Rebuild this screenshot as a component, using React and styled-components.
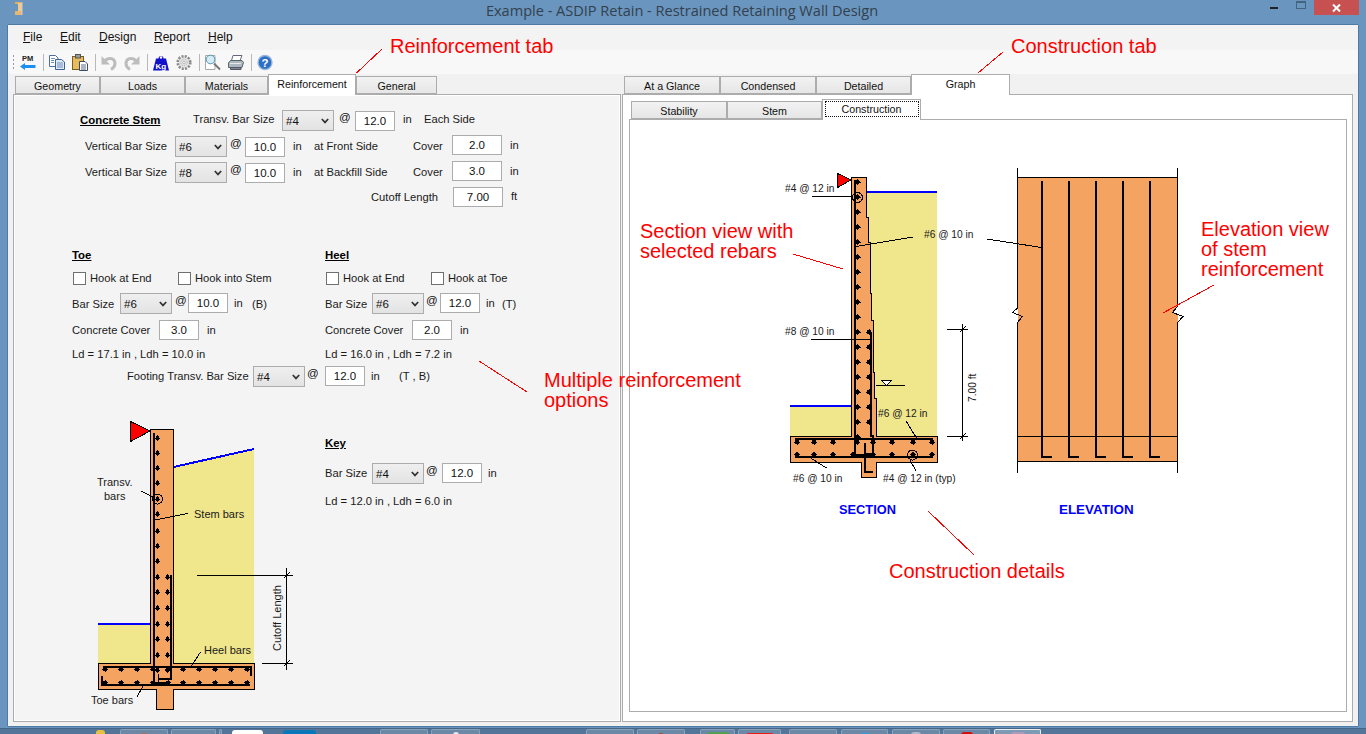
import React from "react";
import styled, { createGlobalStyle } from "styled-components";

const Global = createGlobalStyle`
  html, body { margin: 0; padding: 0; width: 100%; height: 100%; overflow: hidden; background: #6a95be; }
  * { box-sizing: border-box; }
  #root { width: 1366px; height: 734px; }
`;

const SANS = `"Liberation Sans", Arial, sans-serif`;

const Screen = styled.div`
  position: relative; width: 1366px; height: 734px; overflow: hidden; background: #6a95be;
  display: flex; flex-direction: column; font-family: ${SANS}; color: #111;
`;
const TitleBar = styled.div`
  height: 25px; flex: none; display: flex; align-items: flex-start; padding-left: 14px;
`;
const AppIcon = styled.svg`width: 10px; height: 15px; margin-top: 1px; flex: none;`;
const TitleText = styled.div`
  width: 1236px; flex: none; text-align: center; padding-left: 80px; font: 14.6px/20px "Open Sans", sans-serif; color: #33414e; letter-spacing: -0.03px;
`;
const Controls = styled.div`display: flex; align-items: flex-start; margin-left: 10px; flex: none;`;
const MinBtn = styled.div`width: 8px; height: 2px; background: #222; margin: 7px 0 0 0;`;
const MaxBtn = styled.div`width: 10px; height: 8px; border: 1px solid #44637f; border-top-width: 2px; margin: 1px 0 0 18px;`;
const CloseBtn = styled.div`
  width: 45px; height: 15px; background: #c75050; margin-left: 8px; display: flex; align-items: center; justify-content: center;
`;

const AppWindow = styled.div`
  flex: none; height: 701px; margin: 0 8px; background: #f1f1f1; display: flex; flex-direction: column;
  box-shadow: 0 -1px 0 #4d7ba5, -1px 0 0 #4d7ba5, 1px 0 0 #4d7ba5, 0 1px 0 #4d7ba5;
`;
const MenuBar = styled.div`
  height: 25px; flex: none; display: flex; align-items: center; padding: 0 0 1px 15px; background: #f3f3f3; font-size: 12px;
`;
const MenuItem = styled.span`
  width: ${p => p.$w}px; flex: none; color: #111;
  &::first-letter { text-decoration: underline; }
`;
const ToolBar = styled.div`
  height: 24px; flex: none; display: flex; align-items: center; gap: 7px; padding-left: 4px;
  background: #f8f8f8; border-bottom-left-radius: 4px;
`;
const Grip = styled.div`
  width: 3px; height: 17px; margin-right: -2px;
  background-image: radial-gradient(#9a9a9a 0.8px, transparent 1px); background-size: 3px 4px;
`;
const ToolSep = styled.div`width: 1px; height: 17px; background: #b9b9b9; margin-right: -2px;`;
const ToolIcon = styled.svg`width: 16px; height: 17px; flex: none; overflow: visible;`;

const Panes = styled.div`
  flex: 1; min-height: 0; display: flex; gap: 1px; padding: 0 5px 4px;
`;
const Pane = styled.div`
  width: ${p => p.$w}px; flex: none; display: flex; flex-direction: column;
`;
const TabStrip = styled.div`
  height: ${p => p.$h || 20}px; flex: none; display: flex; align-items: flex-end; padding-left: 2px; position: relative; z-index: 1;
  margin-top: ${p => p.$mt || 0}px; margin-left: ${p => p.$ml || 0}px;
`;
const Tab = styled.div`
  width: ${p => p.$w}px; flex: none; border: 1px solid #acacac; display: flex; justify-content: center; color: #111;
  font-size: 10.7px;
  ${p => p.$active ? `
    height: 21px; margin-bottom: -1px; background: #fff; border-bottom: 0; padding-top: 2px; line-height: 15px;
  ` : `
    height: 18px; background: linear-gradient(#f2f2f2, #e6e6e6); line-height: 19px;
  `}
`;
const FocusBox = styled.span`
  border: 1px dotted #111; width: 94px; height: 16px; text-align: center; line-height: 14px; margin-top: -1px; background: #fff;
`;
const Panel = styled.div`
  flex: 1; min-height: 0; border: 1px solid #acacac; padding: 1px; background: ${p => p.$bg};
  box-shadow: inset 0 0 0 1px #fff; display: flex; flex-direction: column;
`;
const Form = styled.div`
  padding-top: 14px; display: flex; flex-direction: column; background: #f4f4f4; flex: 1; font-size: 11.2px;
`;
const Row = styled.div`
  display: flex; align-items: flex-start; height: ${p => p.$h || 21}px; margin-top: ${p => p.$mt || 0}px; padding-left: ${p => p.$pl || 0}px; flex: none;
`;
const Label = styled.span`
  display: block; flex: none; white-space: nowrap; line-height: 21px;
  ${p => p.$w ? `width: ${p.$w}px;` : ""}
  margin-left: ${p => p.$l || 0}px; margin-top: ${p => p.$t || 0}px; color: #1a1a1a;
`;
const Heading = styled.span`
  display: block; flex: none; white-space: nowrap; font-weight: bold; text-decoration: underline; font-size: 11.4px; line-height: 20px; color: #000;
  ${p => p.$w ? `width: ${p.$w}px;` : ""}
`;
const At = styled.span`
  display: block; flex: none; width: ${p => p.$w}px; padding-left: ${p => p.$pad}px; line-height: 21px; margin-top: -3px; font-size: 11.5px;
`;
const SelectBox = styled.div`
  width: 52px; height: 21px; flex: none; border: 1px solid #acacac; background: linear-gradient(#efefef, #e3e3e3);
  display: flex; align-items: center; justify-content: space-between; padding: 1px 4px 0 3px; font-size: 11.5px; color: #111;
`;
const Chevron = styled.svg`width: 8px; height: 6px; flex: none;`;
const NumInput = styled.input`
  width: ${p => p.$w}px; height: 20px; flex: none; border: 1px solid #acacac; background: #fff; text-align: center; padding: 0 0 1px;
  margin-top: ${p => p.$t || 0}px; font: 11.5px ${SANS}; color: #111; outline: none; border-radius: 0;
`;
const Check = styled.input.attrs({ type: "checkbox" })`
  appearance: none; width: 13px; height: 13px; flex: none; margin: 4px 0 0 1px; background: #fff; border: 1px solid #707070; border-radius: 0;
`;
const Columns = styled.div`display: flex; margin-top: 37px; flex: none;`;
const Column = styled.div`
  width: ${p => p.$w}px; flex: none; padding-left: ${p => p.$pl || 0}px; display: flex; flex-direction: column;
`;
const BottomArea = styled.div`display: flex; margin-top: 33px; padding-left: 75px; flex: none;`;
const KeyColumn = styled.div`margin-left: 25px; padding-top: 13px; display: flex; flex-direction: column;`;

const Diagram = styled.svg`
  display: block; flex: none; width: ${p => p.$w}px; height: ${p => p.$h}px;
  text { font-family: ${SANS}; fill: #1a1a1a; }
`;
const GraphArea = styled.div`
  margin-left: 5px; width: 718px; height: 593px; border: 1px solid #acacac; background: #fff; flex: none;
`;
const Overlay = styled.div`position: absolute; inset: 0; pointer-events: none; z-index: 5;`;
const OverlayLines = styled.svg`display: block; width: 1366px; height: 734px;`;
const Note = styled.div`
  position: absolute; left: ${p => p.$x}px; top: ${p => p.$y}px; color: #ff0000; font-size: 20px; line-height: 20px; white-space: nowrap;
`;
const TaskBar = styled.div`
  flex: none; margin-top: 2px; height: 6px; background: #527599; display: flex; align-items: flex-start; border-top: 1px solid #466685;
`;
const TaskItem = styled.div`
  flex: none; width: ${p => p.$w}px; margin-left: ${p => p.$l}px; height: 6px; display: flex; justify-content: center; border-radius: 2px 2px 0 0;
  ${p => p.$plain ? "" : `border: 1px solid ${p.$active ? "#e8eef4" : "#8aa3bb"}; border-bottom: 0; background: ${p.$active ? "#7f9ab5" : "#6b89a7"};`}
`;
const TaskGlimpse = styled.div`
  width: ${p => p.$w}px; height: 4px; background: ${p => p.$c}; margin-top: ${p => p.$t || 1}px; border-radius: 3px 3px 0 0;
`;

const Sel = ({ v }) => (
  <SelectBox>
    <span>{v}</span>
    <Chevron viewBox="0 0 8 6"><path d="M0.8 1 L4 4.4 L7.2 1" fill="none" stroke="#333" strokeWidth="1.7" /></Chevron>
  </SelectBox>
);
const Num = ({ v, w = 40, t }) => <NumInput readOnly value={v} $w={w} $t={t} />;

const STEEL = "#000";
const Dot = ({ x, y, s = 1 }) => (
  <g>
    <circle cx={x} cy={y} r={2.2 * s} fill={STEEL} />
    <path d={`M${x - 3 * s} ${y}H${x + 3 * s}M${x} ${y - 3 * s}V${y + 3 * s}`} stroke={STEEL} strokeWidth="1" />
  </g>
);
const Seg = ({ d, w = 1, c = "#000" }) => <path d={d} fill="none" stroke={c} strokeWidth={w} />;

const LEFT_STEM_Y = [438, 453, 468, 483, 499, 514, 531, 546, 561, 577, 592, 608, 624, 639, 655, 670];
const LEFT_BACK_Y = [577, 592, 608, 624, 639, 655, 670];
const LEFT_FOOT_X = [105, 121, 137, 153, 168, 183, 199, 215, 231, 247];

const RetainingMini = () => (
  <Diagram viewBox="90 420 210 292" $w={210} $h={292}>
    <g shapeRendering="crispEdges">
      <polygon points="173,467 254,449 254,663 173,663" fill="#f0e68c" />
      <rect x="98" y="624" width="52" height="39" fill="#f0e68c" />
      <Seg d="M173.5 467 L254 449" w={2} c="#0000ff" />
      <Seg d="M98 624 H150" w={2} c="#0000ff" />
      <path d="M150.5 429.5 H173.5 V663.5 H254.5 V689.5 H173.5 V709.5 H156.5 V689.5 H98.5 V663.5 H150.5 Z" fill="#f4a460" stroke="#000" />
      <polygon points="130.5,421.5 130.5,441.5 150,431" fill="#ff0000" stroke="#000" />
      <Seg d="M154 433 V683" w={2} />
      <Seg d="M170.5 575 V679 H158" w={2} />
      <Seg d="M103 666.5 H251 V676" w={2} />
      <Seg d="M102 676 V684.5 H250" w={2} />
      <Seg d="M152 683 H167" w={2} />
      <Seg d="M158 674 V683" w={1} />
      <Seg d="M141 491 L155 498" />
      <Seg d="M155 520 L188 513.5" />
      <Seg d="M197 575.5 H293" />
      <Seg d="M262 663.5 H293" />
      <Seg d="M286.5 568 V669.5" />
      <Seg d="M283.5 578.5 L289.5 572.5 M283.5 666.5 L289.5 660.5" />
      <Seg d="M191.5 666 L200.5 652" />
      <Seg d="M137 697 L143 686" />
      {LEFT_STEM_Y.map(y => <Dot key={y} x={157.5} y={y} s={0.85} />)}
      {LEFT_BACK_Y.map(y => <Dot key={y} x={167.5} y={y} s={0.85} />)}
      {LEFT_FOOT_X.map(x => <Dot key={x} x={x} y={669.5} s={0.85} />)}
      {LEFT_FOOT_X.map(x => <Dot key={x} x={x} y={682.5} s={0.85} />)}
      <circle cx="157.5" cy="499" r="5" fill="none" stroke="#000" />
    </g>
    <g fontSize="11">
      <text x="97" y="486">Transv.</text>
      <text x="104" y="500">bars</text>
      <text x="194" y="518">Stem bars</text>
      <text x="204" y="654">Heel bars</text>
      <text x="91" y="704">Toe bars</text>
      <text transform="translate(281 651) rotate(-90)">Cutoff Length</text>
    </g>
  </Diagram>
);

const SEC_STEM_Y = [182, 197, 212, 227, 242, 257, 272, 287, 302, 317, 332, 347, 362, 377, 392, 407, 422, 437];
const SEC_BACK_Y = [332, 347, 362, 377, 392, 407, 422];
const SEC_TOP_X = [797, 814, 833, 857, 873, 892, 913, 932];
const SEC_BOT_X = [797, 814, 833, 853, 873, 892, 913, 932];
const ELEV_X = [1041.5, 1069, 1096, 1123, 1150];

const GraphDrawing = () => (
  <Diagram viewBox="630 120 716 591" $w={716} $h={591}>
    <g shapeRendering="crispEdges">
      <rect x="866" y="192" width="71" height="245" fill="#f0e68c" />
      <rect x="790" y="406" width="62" height="31" fill="#f0e68c" />
      <Seg d="M867 192 H937" w={2} c="#0000ff" />
      <Seg d="M790 406 H852" w={2} c="#0000ff" />
      <path d="M851.5 177.5 H866.5 V217 H868 V242 H870 V293 H871.5 V320 H873 V372 H874.5 V398 H876 V436.5 H937.5 V462.5 H876.5 V477.5 H861.5 V462.5 H790.5 V436.5 H851.5 Z" fill="#f4a460" stroke="#000" />
      <polygon points="837.5,173.5 837.5,187.5 851,180" fill="#ff0000" stroke="#000" />
      <Seg d="M855 180 V455" w={2} />
      <Seg d="M871 332 V436 H872.5 V455 H855" w={2} />
      <Seg d="M795 439 H933" w={2} />
      <Seg d="M795 456.5 H933" w={2} />
      <Seg d="M865 443 V471.5 H873" w={2} />
      <Seg d="M866 453 H873 V458" w={1} />
      {SEC_STEM_Y.map(y => <Dot key={y} x={857.5} y={y} />)}
      {SEC_BACK_Y.map(y => <Dot key={y} x={869} y={y} />)}
      {SEC_TOP_X.map(x => <Dot key={x} x={x} y={442} />)}
      {SEC_BOT_X.map(x => <Dot key={x} x={x} y={454.5} />)}
      <circle cx="857.5" cy="197.5" r="5" fill="none" stroke="#000" />
      <circle cx="912.5" cy="455" r="5" fill="none" stroke="#000" />
      <Seg d="M812 196.5 H853" />
      <Seg d="M913 237 L856 246.5" />
      <Seg d="M811 339.5 H870" />
      <Seg d="M876 385.5 H905" />
      <path d="M881.5 380.5 H891.5 L886.5 385.5 Z" fill="#fff" stroke="#000" />
      <Seg d="M906 421 L916.5 438" />
      <Seg d="M810 457.5 L826.5 468" />
      <Seg d="M910 460.5 L916.5 471.5" />
      <Seg d="M947 329.5 H968" />
      <Seg d="M947 436.5 H968" />
      <Seg d="M962.5 324 V441" />
      <Seg d="M959.5 332.5 L965.5 326.5 M959.5 439.5 L965.5 433.5" />

      <polygon points="1017.5,177.5 1177.5,177.5 1177.5,461.5 1017.5,461.5" fill="#f4a460" />
      <polygon points="1177.5,306.5 1172.5,312.5 1183,316.5 1177.5,322.5 1190,322 1190,306" fill="#fff" />
      <Seg d="M1017.5 167.5 V308 L1012.5 312.5 L1022.5 316.5 L1017.5 322.5 V472.5" />
      <Seg d="M1177.5 167.5 V306.5 L1172.5 312.5 L1183 316.5 L1177.5 322.5 V472.5" />
      <Seg d="M1017.5 177.5 H1177.5" />
      <Seg d="M1017.5 461.5 H1177.5" />
      <Seg d="M1017.5 436.5 H1177.5" />
      {ELEV_X.map(x => <Seg key={x} d={`M${x} 181 V456.5 H${x + 10}`} w={2} />)}
      <Seg d="M987 239 L1041.5 247.5" />
    </g>
    <g fontSize="10.2">
      <text x="785" y="192">#4 @ 12 in</text>
      <text x="924" y="238">#6 @ 10 in</text>
      <text x="785" y="335">#8 @ 10 in</text>
      <text x="878" y="417">#6 @ 12 in</text>
      <text x="793" y="482">#6 @ 10 in</text>
      <text x="883" y="482">#4 @ 12 in (typ)</text>
      <text transform="translate(975.5 402) rotate(-90)">7.00 ft</text>
    </g>
    <g fontWeight="bold">
      <text x="839" y="514" fontSize="12.8" style={{ fill: "#0000ff" }}>SECTION</text>
      <text x="1059" y="514" fontSize="13.4" style={{ fill: "#0000ff" }}>ELEVATION</text>
    </g>
  </Diagram>
);

const PmIcon = () => (
  <ToolIcon viewBox="0 0 16 17">
    <text x="2" y="7" fontSize="7.5" fontWeight="bold" fontFamily={SANS} fill="#222">PM</text>
    <path d="M0 12.5 L5 9 V11 H15.5 V14 H5 V16 Z" fill="#1c8ff0" />
  </ToolIcon>
);
const CopyIcon = () => (
  <ToolIcon viewBox="0 0 16 17">
    <path d="M0.5 1.5 H6.5 L9 4 V12.5 H0.5 Z" fill="#fff" stroke="#4f6f9e" />
    <path d="M6.5 5.5 H12.5 L15.5 8 V15.5 H6.5 Z" fill="#dfe8f5" stroke="#3e6296" />
    <path d="M8 9 H14 M8 11 H14 M8 13 H14 M2 4.5 H6 M2 6.5 H5 M2 8.5 H5" stroke="#6f8fbf" />
  </ToolIcon>
);
const PasteIcon = () => (
  <ToolIcon viewBox="0 0 16 17">
    <rect x="0.5" y="2.5" width="11" height="13" fill="#e6bc5c" stroke="#7d5c20" />
    <rect x="3.5" y="0.5" width="5" height="3.5" fill="#9a9a9a" stroke="#555" />
    <path d="M7.5 7.5 H13 L15.5 10 V16.5 H7.5 Z" fill="#fff" stroke="#3c4a63" />
    <path d="M9 11 H14 M9 13 H14 M9 15 H14" stroke="#566a8a" />
  </ToolIcon>
);
const UndoIcon = ({ flip }) => (
  <ToolIcon viewBox="0 0 16 17">
    <g transform={flip ? "translate(16 0) scale(-1 1)" : undefined}>
      <path d="M4 6.5 C8 3 14 4 14 9.5 C14 12 12.5 14 10 15.5" fill="none" stroke="#bdbdbd" strokeWidth="3" />
      <path d="M0.5 2 V10.5 H9 Z" fill="#bdbdbd" />
    </g>
  </ToolIcon>
);
const KgIcon = () => (
  <ToolIcon viewBox="0 0 16 17">
    <path d="M5.5 4.5 A2.5 2.5 0 1 1 10.5 4.5 H13 L16 16.5 H0 L3 4.5 Z" fill="#1111cc" />
    <circle cx="8" cy="3.5" r="1.2" fill="#f8f8f8" />
    <text x="2.6" y="14.5" fontSize="8" fontWeight="bold" fontFamily={SANS} fill="#fff">Kg</text>
  </ToolIcon>
);
const GearIcon = () => (
  <ToolIcon viewBox="0 0 16 17">
    <circle cx="8" cy="8.5" r="6.3" fill="#e6e6e6" stroke="#8a8a8a" strokeWidth="2.6" strokeDasharray="2 1.3" />
    <circle cx="8" cy="8.5" r="3.2" fill="none" stroke="#a8a8a8" strokeDasharray="1 1" />
    <circle cx="8" cy="8.5" r="1.3" fill="#f8f8f8" stroke="#999" strokeWidth="0.6" />
  </ToolIcon>
);
const SearchIcon = () => (
  <ToolIcon viewBox="0 0 16 17">
    <path d="M0.5 1.5 H10 V15.5 H0.5 Z" fill="#fff" stroke="#a8a8a8" />
    <circle cx="5.5" cy="5.5" r="4.3" fill="#d4eef8" stroke="#5a94ac" />
    <path d="M9 9.5 L15 15.5" stroke="#777" strokeWidth="2" />
  </ToolIcon>
);
const PrintIcon = () => (
  <ToolIcon viewBox="0 0 16 17">
    <path d="M5 1.5 H14 L12 6.5 H3.5 Z" fill="#fff" stroke="#667" />
    <path d="M2.5 6.5 H14 L15.5 8.5 L14 13.5 H0.5 V9 Z" fill="#aeb6c2" stroke="#566" />
    <path d="M2.5 13.5 H13 V15.5 H2.5 Z" fill="#7c8796" stroke="#556" />
    <path d="M2 9.5 H13" stroke="#e8e8e8" />
  </ToolIcon>
);
const HelpIcon = () => (
  <ToolIcon viewBox="0 0 16 17">
    <circle cx="8" cy="8.5" r="7" fill="#2d6fc4" stroke="#9ab8da" strokeWidth="1.4" />
    <text x="8" y="12.6" textAnchor="middle" fontSize="11.5" fontWeight="bold" fontFamily={SANS} fill="#fff">?</text>
  </ToolIcon>
);

const TASK_ITEMS = [
  { l: 96, w: 9, plain: true, c: "#e8c040", g: 9 },
  { l: 15, w: 48, c: "#b56a5a", g: 8, t: 3 },
  { l: 3, w: 45 },
  { l: 3, w: 3 },
  { l: 10, w: 31, plain: true, c: "#ffffff", g: 31 },
  { l: 20, w: 33, plain: true, c: "#0a78b8", g: 33 },
  { l: 64, w: 48 },
  { l: 3, w: 49, c: "#e8e8e8", g: 6, t: 2 },
  { l: 106, w: 48 },
  { l: 3, w: 48, c: "#b8422e", g: 6, t: 3 },
  { l: 15, w: 35, c: "#50a050", g: 22, t: 2 },
  { l: 3, w: 43, c: "#e81c10", g: 28, t: 3 },
  { l: 8, w: 48 },
  { l: 4, w: 47, c: "#22a0e0", g: 10, t: 3 },
  { l: 4, w: 48, c: "#b0b8c8", g: 10, t: 2 },
  { l: 3, w: 47, c: "#d01010", g: 12, t: 2 },
  { l: 4, w: 47, active: true, c: "#b09ab8", g: 14, t: 2 },
];

export default function App() {
  return (
    <Screen>
      <Global />
      <TitleBar>
        <AppIcon viewBox="0 0 10 15">
          <path d="M1 1 H7 V3 H1 Z" fill="#e0b060" />
          <path d="M4 2 H8 V12 H4 Z" fill="#f4c888" />
          <path d="M1 10 H8 V14 H1 Z" fill="#e8b670" />
          <path d="M8 1 V14" stroke="#c8d0d8" strokeWidth="1" />
        </AppIcon>
        <TitleText>Example - ASDIP Retain - Restrained Retaining Wall Design</TitleText>
        <Controls>
          <MinBtn />
          <MaxBtn />
          <CloseBtn>
            <svg width="9" height="8" viewBox="0 0 9 8"><path d="M1 0.5 L8 7.5 M8 0.5 L1 7.5" stroke="#fff" strokeWidth="2" /></svg>
          </CloseBtn>
        </Controls>
      </TitleBar>

      <AppWindow>
        <MenuBar>
          <MenuItem $w={37}>File</MenuItem>
          <MenuItem $w={39}>Edit</MenuItem>
          <MenuItem $w={55}>Design</MenuItem>
          <MenuItem $w={54}>Report</MenuItem>
          <MenuItem $w={30}>Help</MenuItem>
        </MenuBar>
        <ToolBar>
          <Grip />
          <PmIcon />
          <ToolSep />
          <CopyIcon />
          <PasteIcon />
          <ToolSep />
          <UndoIcon />
          <UndoIcon flip />
          <ToolSep />
          <KgIcon />
          <GearIcon />
          <ToolSep />
          <SearchIcon />
          <PrintIcon />
          <ToolSep />
          <HelpIcon />
        </ToolBar>

        <Panes>
          <Pane $w={608}>
            <TabStrip>
              <Tab $w={85}>Geometry</Tab>
              <Tab $w={85}>Loads</Tab>
              <Tab $w={83}>Materials</Tab>
              <Tab $w={88} $active>Reinforcement</Tab>
              <Tab $w={81}>General</Tab>
            </TabStrip>
            <Panel $bg="#f4f4f4">
              <Form>
                <Row $pl={65}>
                  <Heading $w={113}>Concrete Stem</Heading>
                  <Label $w={89} $t={-1}>Transv. Bar Size</Label>
                  <Sel v="#4" />
                  <At $w={21} $pad={5}>@</At>
                  <Num v="12.0" t={1} />
                  <Label $l={8} $w={21} $t={-1}>in</Label>
                  <Label $t={-1}>Each Side</Label>
                </Row>
                <Row $mt={5} $pl={70}>
                  <Label $w={90}>Vertical Bar Size</Label>
                  <Sel v="#6" />
                  <At $w={18} $pad={3}>@</At>
                  <Num v="10.0" t={1} />
                  <Label $l={8} $w={21}>in</Label>
                  <Label $w={99}>at Front Side</Label>
                  <Label $w={39}>Cover</Label>
                  <Num v="2.0" w={50} t={-1} />
                  <Label $l={8} $t={-1}>in</Label>
                </Row>
                <Row $mt={5} $pl={70}>
                  <Label $w={90}>Vertical Bar Size</Label>
                  <Sel v="#8" />
                  <At $w={18} $pad={3}>@</At>
                  <Num v="10.0" t={1} />
                  <Label $l={8} $w={21}>in</Label>
                  <Label $w={99}>at Backfill Side</Label>
                  <Label $w={39}>Cover</Label>
                  <Num v="3.0" w={50} t={-1} />
                  <Label $l={8} $t={-1}>in</Label>
                </Row>
                <Row $mt={4} $pl={356}>
                  <Label $w={82}>Cutoff Length</Label>
                  <Num v="7.00" w={50} />
                  <Label $l={8} $t={-1}>ft</Label>
                </Row>

                <Columns>
                  <Column $w={310} $pl={57}>
                    <Row $h={20}><Heading>Toe</Heading></Row>
                    <Row $mt={3}>
                      <Check />
                      <Label $l={4} $w={87}>Hook at End</Label>
                      <Check />
                      <Label $l={4}>Hook into Stem</Label>
                    </Row>
                    <Row $mt={4}>
                      <Label $w={48} $t={1}>Bar Size</Label>
                      <Sel v="#6" />
                      <At $w={16} $pad={3}>@</At>
                      <Num v="10.0" />
                      <Label $l={6} $w={18}>in</Label>
                      <Label $t={1}>(B)</Label>
                    </Row>
                    <Row $mt={6} $h={20}>
                      <Label $w={87}>Concrete Cover</Label>
                      <Num v="3.0" />
                      <Label $l={8}>in</Label>
                    </Row>
                    <Row $mt={4}><Label>Ld = 17.1 in , Ldh = 10.0 in</Label></Row>
                  </Column>
                  <Column $w={290}>
                    <Row $h={20}><Heading>Heel</Heading></Row>
                    <Row $mt={3}>
                      <Check />
                      <Label $l={4} $w={87}>Hook at End</Label>
                      <Check />
                      <Label $l={4}>Hook at Toe</Label>
                    </Row>
                    <Row $mt={4}>
                      <Label $w={47} $t={1}>Bar Size</Label>
                      <Sel v="#6" />
                      <At $w={16} $pad={2}>@</At>
                      <Num v="12.0" />
                      <Label $l={6} $w={16}>in</Label>
                      <Label $t={1}>(T)</Label>
                    </Row>
                    <Row $mt={6} $h={20}>
                      <Label $w={87}>Concrete Cover</Label>
                      <Num v="2.0" />
                      <Label $l={8}>in</Label>
                    </Row>
                    <Row $mt={4}><Label>Ld = 16.0 in , Ldh = 7.2 in</Label></Row>
                  </Column>
                </Columns>
                <Row $mt={1} $pl={112}>
                  <Label $w={126}>Footing Transv. Bar Size</Label>
                  <Sel v="#4" />
                  <At $w={20} $pad={2}>@</At>
                  <Num v="12.0" />
                  <Label $l={6} $w={28}>in</Label>
                  <Label>(T , B)</Label>
                </Row>

                <BottomArea>
                  <RetainingMini />
                  <KeyColumn>
                    <Row $h={20}><Heading>Key</Heading></Row>
                    <Row $mt={10}>
                      <Label $w={47}>Bar Size</Label>
                      <Sel v="#4" />
                      <At $w={18} $pad={2}>@</At>
                      <Num v="12.0" />
                      <Label $l={6}>in</Label>
                    </Row>
                    <Row $mt={7}><Label>Ld = 12.0 in , Ldh = 6.0 in</Label></Row>
                  </KeyColumn>
                </BottomArea>
              </Form>
            </Panel>
          </Pane>

          <Pane $w={731}>
            <TabStrip>
              <Tab $w={96}>At a Glance</Tab>
              <Tab $w={96}>Condensed</Tab>
              <Tab $w={95}>Detailed</Tab>
              <Tab $w={99} $active>Graph</Tab>
            </TabStrip>
            <Panel $bg="#fff">
              <TabStrip $mt={3} $ml={5}>
                <Tab $w={96}>Stability</Tab>
                <Tab $w={95}>Stem</Tab>
                <Tab $w={99} $active><FocusBox>Construction</FocusBox></Tab>
              </TabStrip>
              <GraphArea>
                <GraphDrawing />
              </GraphArea>
            </Panel>
          </Pane>
        </Panes>
      </AppWindow>

      <TaskBar>
        {TASK_ITEMS.map((it, i) => (
          <TaskItem key={i} $l={it.l} $w={it.w} $plain={it.plain} $active={it.active}>
            {it.c && <TaskGlimpse $w={it.g} $c={it.c} $t={it.t} />}
          </TaskItem>
        ))}
      </TaskBar>

      <Overlay>
        <OverlayLines viewBox="0 0 1366 734">
          <g stroke="#ff0000" strokeWidth="1" fill="none" shapeRendering="crispEdges">
            <path d="M356.5 73 L382 49" />
            <path d="M978 73 L1003 52" />
            <path d="M793 254 L843 269" />
            <path d="M479 361 L527 392" />
            <path d="M928 511 L974 555" />
            <path d="M1163 313 L1214 285" />
          </g>
        </OverlayLines>
        <Note $x={390} $y={36}>Reinforcement tab</Note>
        <Note $x={1011} $y={36}>Construction tab</Note>
        <Note $x={640} $y={221}>Section view with<br />selected rebars</Note>
        <Note $x={1201} $y={219}>Elevation view<br />of stem<br />reinforcement</Note>
        <Note $x={544} $y={370}>Multiple reinforcement<br />options</Note>
        <Note $x={889} $y={561}>Construction details</Note>
      </Overlay>
    </Screen>
  );
}
